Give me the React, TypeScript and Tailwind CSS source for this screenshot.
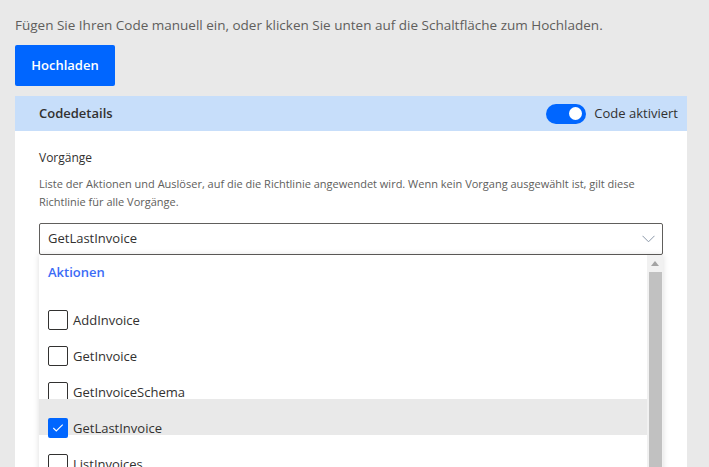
import React from "react";

const items = [
  { label: "AddInvoice", checked: false },
  { label: "GetInvoice", checked: false },
  { label: "GetInvoiceSchema", checked: false },
  { label: "GetLastInvoice", checked: true, active: true },
  { label: "ListInvoices", checked: false },
];

function Checkbox({ checked }: { checked: boolean }) {
  if (checked) {
    return (
      <span className="flex h-[20px] w-[20px] shrink-0 items-center justify-center rounded-[2px] bg-[#0066ff]">
        <svg width="12" height="12" viewBox="0 0 12 12" fill="none">
          <path d="M1.3 6 L4.3 9 L10.7 2.6" stroke="white" strokeWidth="1.1" />
        </svg>
      </span>
    );
  }
  return <span className="h-[20px] w-[20px] shrink-0 rounded-[2px] border border-[#323130] bg-white" />;
}

export default function App() {
  return (
    <div
      className="h-[467px] w-[709px] overflow-hidden bg-[#e9e9e9] text-[#323130]"
      style={{ fontFamily: '"Open Sans", "Noto Sans", sans-serif' }}
    >
      <div className="pl-[15px] pr-[22px] pt-[15px]">
        <div className="h-[20px] text-[13.5px] leading-[20px] text-[#605e5c]">
          Fügen Sie Ihren Code manuell ein, oder klicken Sie unten auf die Schaltfläche zum Hochladen.
        </div>
        <button className="mt-[10px] flex h-[41px] w-[100px] items-center justify-center rounded-[2px] bg-[#0066ff] text-[13px] font-semibold text-white">
          Hochladen
        </button>
        <div className="mt-[10px] bg-white">
          <div className="flex h-[35px] items-center bg-[#c7defa] pl-[24px] pr-[9px]">
            <span className="text-[13px] font-semibold">Codedetails</span>
            <div className="ml-auto flex items-center gap-[8px]">
              <span className="flex h-[20px] w-[40px] items-center justify-end rounded-full bg-[#0066ff] pr-[4px]">
                <span className="h-[13px] w-[13px] rounded-full bg-white" />
              </span>
              <span className="text-[13px]">Code aktiviert</span>
            </div>
          </div>
          <div className="h-[340px] pl-[24px] pr-[24px] pt-[18px]">
            <div className="h-[18px] text-[12px] leading-[18px]">Vorgänge</div>
            <div className="mt-[8px] whitespace-nowrap text-[11px] leading-[18px] text-[#605e5c]">
              Liste der Aktionen und Auslöser, auf die die Richtlinie angewendet wird. Wenn kein Vorgang ausgewählt ist, gilt diese
              <br />
              Richtlinie für alle Vorgänge.
            </div>
            <div className="mt-[12px] flex h-[32px] items-center rounded-[2px] border border-[#605e5c] pl-[8px] pr-[7px]">
              <span className="text-[13px]">GetLastInvoice</span>
              <svg className="ml-auto" width="13" height="8" viewBox="0 0 13 8" fill="none">
                <path d="M0.5 0.8 L6.5 6.8 L12.5 0.8" stroke="#8a97a8" strokeWidth="1" />
              </svg>
            </div>
            <div className="flex h-[220px] bg-white shadow-[0_0_6px_rgba(0,0,0,0.14)]">
              <div className="flex-1">
                <div className="flex h-[36px] items-center pl-[9px] text-[13px] font-semibold text-[#3b6cf6]">
                  Aktionen
                </div>
                {items.map((it) => (
                  <div
                    key={it.label}
                    className={`relative h-[36px] pl-[9px] pt-[19px] ${it.active ? "bg-[#e9e9e9]" : ""}`}
                  >
                    <div className="flex h-[20px] items-center gap-[5px]">
                      <Checkbox checked={it.checked} />
                      <span className="text-[13px] leading-[20px]">{it.label}</span>
                    </div>
                  </div>
                ))}
              </div>
              <div className="flex w-[16px] flex-col bg-[#f1f1f1]">
                <div className="flex h-[17px] items-center justify-center">
                  <svg width="8" height="5" viewBox="0 0 8 5">
                    <path d="M0 5 L4 0 L8 5 Z" fill="#a3a3a3" />
                  </svg>
                </div>
                <div className="ml-[2px] mr-[1px] flex-1 bg-[#c1c1c1]" />
              </div>
            </div>
          </div>
        </div>
      </div>
    </div>
  );
}
